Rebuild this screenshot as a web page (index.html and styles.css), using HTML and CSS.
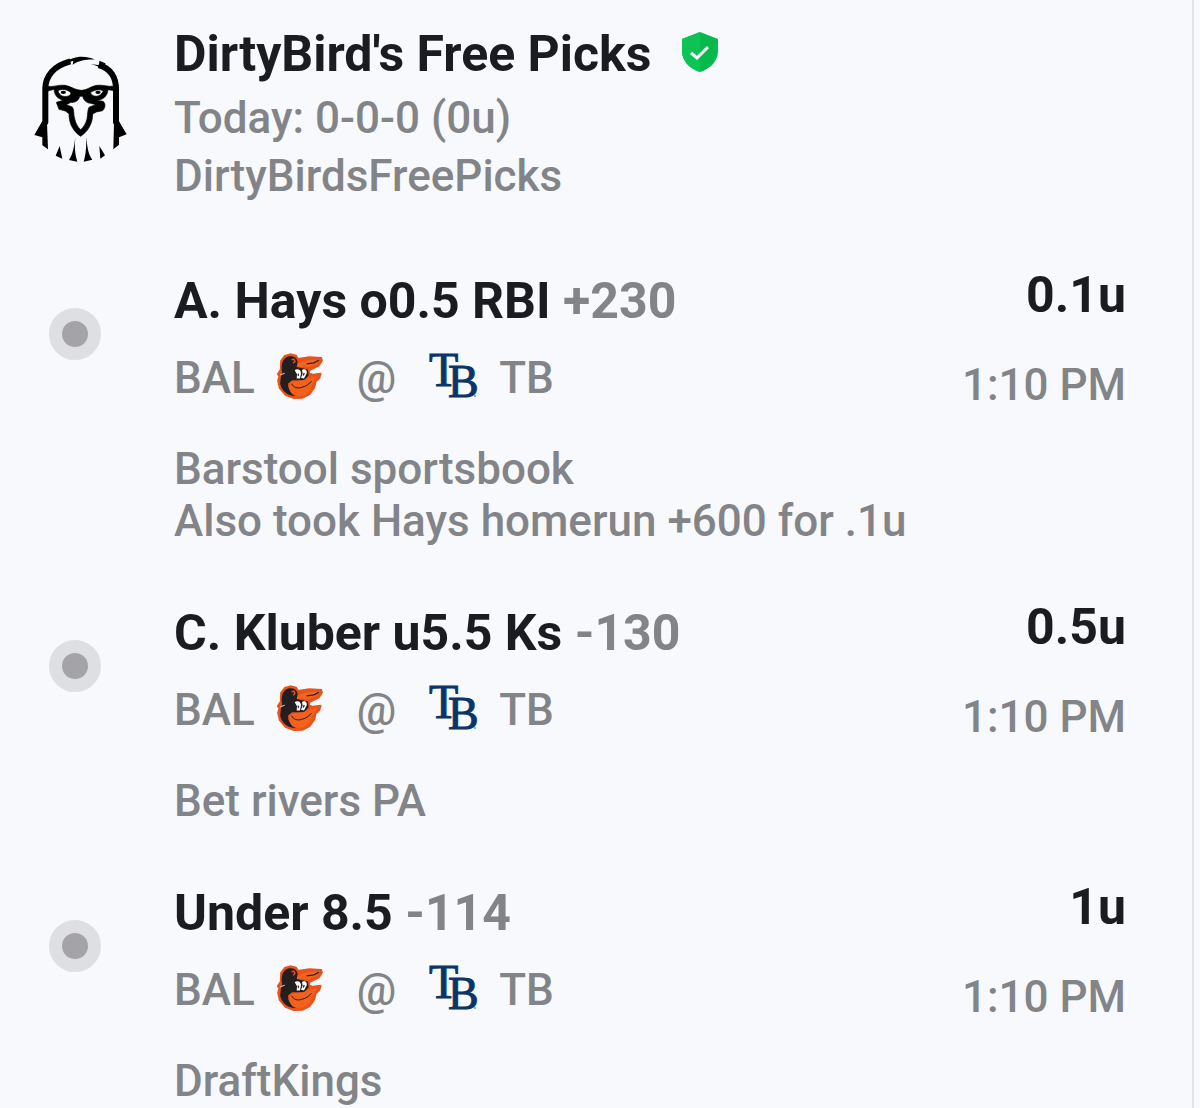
FILE: index.html
```html
<!DOCTYPE html>
<html lang="en">
<head>
<meta charset="utf-8">
<meta name="viewport" content="width=device-width, initial-scale=1">
<title>DirtyBird's Free Picks</title>
<link rel="stylesheet" href="styles.css">
</head>
<body>
<svg width="0" height="0" class="sprite" aria-hidden="true">
  <symbol id="orioles" viewBox="0 0 144 142">
    <path fill="#e8531c" stroke="#e8531c" stroke-width="6" stroke-linejoin="round" d="M14 50 15 24 26 9 42 4 60 8 66 18 100 13 136 15 138 23 128 38 100 52 99 62 112 66 134 63 130 76 119 86 115 104 101 124 80 135 54 136 28 126 11 106 6 84 10 70 5 64Z"/>
    <path fill="#231f20" d="M18 58C14 36 18 18 34 11 48 7 62 11 65 26L62 42 96 50 98 68 84 82 48 82 36 92C35 110 46 124 60 130 34 130 16 114 12 92L14 74Z"/>
    <path fill="#f26522" d="M64 36C70 28 84 24 98 22L132 19 122 33 98 42C86 40 74 40 64 42Z"/>
    <path fill="none" stroke="#231f20" stroke-width="4" d="M92 33 114 30 129 22"/>
    <path fill="none" stroke="#e8531c" stroke-width="4" d="M46 20 54 19 57 26 51 31"/>
    <path fill="none" stroke="#d8d5d4" stroke-width="3" d="M12 66 26 61"/>
    <path fill="#fff" d="M56 52C64 46 76 51 75 62L72 77 62 77 63 64Z"/>
    <path fill="#fff" d="M78 51C87 46 95 53 92 62L84 77 75 75 80 62Z"/>
    <path fill="#231f20" d="M65 62 69 63 68 70 65 69ZM83 60 87 62 83 69 80 68Z"/>
    <path fill="#f4611d" d="M42 92C52 80 76 88 96 76L124 70C118 82 112 86 108 96L102 114 86 128 66 130 48 124 39 106Z"/>
    <path fill="none" stroke="#231f20" stroke-width="3" stroke-linecap="round" d="M47 94C52 104 64 108 76 104 90 101 100 94 106 86"/>
  </symbol>
</svg>
<main class="feed">
  <header class="profile">
    <svg class="avatar" viewBox="45 45 280 324" role="img" aria-label="DirtyBird logo">
      <path d="M78 150C76 106 107 76 153 64M238 75C273 85 291 112 290 150M78 140V246L57 284M290 140V246L311 284" fill="none" stroke="#000" stroke-width="18"/>
      <path d="M137 70C155 50 194 44 227 59 207 58 181 60 160 74L162 62C153 64 145 70 137 70ZM213 72 241 76 240 62 258 70 257 88C243 84 229 74 213 72Z"/>
      <path d="M69 244 83 248 86 328 69 316V292L45 285ZM298 244 284 248 282 328 299 314V292L322 283Z"/>
      <path stroke="#000" stroke-width="2" stroke-linejoin="round" fill-rule="evenodd" d="M82 139C104 142 118 133 137 136 156 139 168 151 186 151 203 151 213 139 232 136 253 133 266 142 286 138L286 152 266 149C264 170 250 180 230 181L251 184C260 190 258 204 250 212L231 216 220 222C220 254 203 276 184 289 163 275 149 253 149 221L138 213 119 208 111 187 132 181C113 176 106 165 104 148L82 154ZM116 152C120 170 139 174 153 165L155 158C143 148 128 146 116 152ZM213 158C220 173 243 173 252 153 241 147 226 149 213 158ZM181 169C178 184 166 188 155 187L141 194 159 201C165 209 162 223 166 236 169 251 176 262 184 269 192 262 200 251 203 236 206 222 204 209 210 201L230 194 214 190C200 189 193 180 190 169Z"/>
      <ellipse cx="132" cy="157" rx="8" ry="5"/><ellipse cx="236" cy="157" rx="8" ry="5"/>
      <path d="M121 318 129 356 109 347ZM168 292C165 323 167 343 174 365L149 360C162 341 164 319 168 292ZM201 292C204 321 206 342 219 359L193 365C200 341 201 321 201 292ZM240 318 257 346 243 356Z"/>
    </svg>
    <div class="identity">
      <h1 class="name">DirtyBird's Free Picks
        <svg class="badge" viewBox="0 0 36 40" role="img" aria-label="Verified">
          <path fill="#05b94c" d="M18 0 36 7V19C36 29 28 37 18 40 8 37 0 29 0 19V7Z"/>
          <path fill="#0cc455" d="M18 0V40C8 37 0 29 0 19V7Z"/>
          <path fill="none" stroke="#fff" stroke-width="3" d="M9 21 15 26 26 15"/>
        </svg>
      </h1>
      <p class="meta">Today: 0-0-0 (0u)</p>
      <p class="meta">DirtyBirdsFreePicks</p>
    </div>
  </header>

  <ul class="picks">
    <li class="pick">
      <span class="status"></span>
      <div class="detail">
        <h2 class="bet">A. Hays o0.5 RBI <span class="odds">+230</span></h2>
        <p class="match"><span>BAL</span><svg class="logo-bal"><use href="#orioles"/></svg><span>@</span><svg class="logo-tb" viewBox="0 0 48 46"><text x="1" y="33">T</text><text class="front" x="20" y="44">B</text><circle cx="47" cy="43" r="1"/></svg><span>TB</span></p>
        <p class="note">Barstool sportsbook<br>Also took Hays homerun +600 for .1u</p>
      </div>
      <div class="stake"><strong class="units">0.1u</strong><time class="time">1:10 PM</time></div>
    </li>
    <li class="pick">
      <span class="status"></span>
      <div class="detail">
        <h2 class="bet">C. Kluber u5.5 Ks <span class="odds">-130</span></h2>
        <p class="match"><span>BAL</span><svg class="logo-bal"><use href="#orioles"/></svg><span>@</span><svg class="logo-tb" viewBox="0 0 48 46"><text x="1" y="33">T</text><text class="front" x="20" y="44">B</text><circle cx="47" cy="43" r="1"/></svg><span>TB</span></p>
        <p class="note">Bet rivers PA</p>
      </div>
      <div class="stake"><strong class="units">0.5u</strong><time class="time">1:10 PM</time></div>
    </li>
    <li class="pick">
      <span class="status"></span>
      <div class="detail">
        <h2 class="bet">Under 8.5 <span class="odds">-114</span></h2>
        <p class="match"><span>BAL</span><svg class="logo-bal"><use href="#orioles"/></svg><span>@</span><svg class="logo-tb" viewBox="0 0 48 46"><text x="1" y="33">T</text><text class="front" x="20" y="44">B</text><circle cx="47" cy="43" r="1"/></svg><span>TB</span></p>
        <p class="note">DraftKings</p>
      </div>
      <div class="stake"><strong class="units">1u</strong><time class="time">1:10 PM</time></div>
    </li>
  </ul>
</main>
</body>
</html>
```
FILE: styles.css
```css
* { box-sizing: border-box; }
body {
  margin: 0;
  background: #f7f9fd;
  color: #1a1c22;
  font-family: Roboto, "Liberation Sans", sans-serif;
  font-size: 44px;
  line-height: 52px;
}
h1, h2, p, ul { margin: 0; padding: 0; }
.sprite { position: absolute; }
.feed {
  min-height: 100vh;
  margin-right: 6px;
  padding: 24px 66px 0 0;
  border-right: 2px solid #e2e4ea;
}
.profile, .pick {
  display: grid;
  grid-template-columns: 174px 1fr auto;
  align-items: start;
}
.avatar { width: 94px; height: 108px; margin: 31px 0 0 34px; }
.name, .bet, .units {
  font-size: 50px;
  line-height: 60px;
  font-weight: 700;
}
.name { display: flex; align-items: center; gap: 30px; margin-bottom: 5px; }
.badge { width: 36px; height: 40px; margin-bottom: 4px; }
.meta { color: #838488; line-height: 58px; font-weight: 500; }
.picks { list-style: none; margin-top: 60px; display: grid; gap: 50px; }
.status {
  width: 52px;
  height: 52px;
  margin: 43px 0 0 49px;
  border: 13px solid #dedfe3;
  border-radius: 50%;
  background: #a3a3a8;
}
.detail { padding-top: 6px; }
.odds { color: #838488; }
.match { display: flex; align-items: center; margin-top: 21px; }
.match, .note, .time { color: #838488; font-weight: 500; }
.logo-bal { width: 48px; height: 47px; margin: 0 33px 4px 21px; }
.logo-tb {
  width: 48px;
  height: 46px;
  margin: 0 23px 4px 32px;
  overflow: visible;
  fill: #0a3566;
  stroke: #0a3566;
  stroke-width: 1px;
  font: 400 48px "Liberation Serif", serif;
}
.logo-tb .front { font-size: 46px; }
.logo-tb circle { fill: #7d8fa8; stroke: none; }
.note { margin-top: 39px; }
.stake { display: flex; flex-direction: column; align-items: flex-end; gap: 34px; }
```
